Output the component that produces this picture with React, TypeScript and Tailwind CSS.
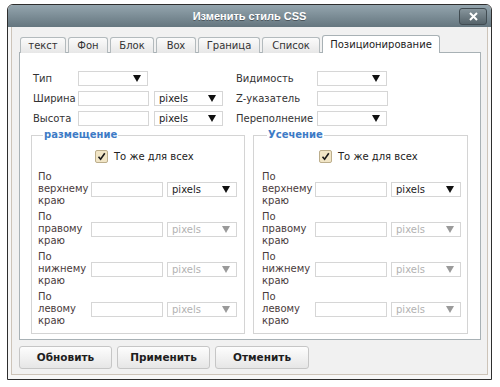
import React from "react";

const tabs = [
  { label: "текст", w: "w-[46px]", active: false },
  { label: "Фон", w: "w-[40px]", active: false },
  { label: "Блок", w: "w-[44px]", active: false },
  { label: "Box", w: "w-[40px]", active: false },
  { label: "Граница", w: "w-[62px]", active: false },
  { label: "Список", w: "w-[58px]", active: false },
  { label: "Позиционирование", w: "w-[118px]", active: true },
];

function Arrow({ disabled }: { disabled?: boolean }) {
  return (
    <svg width="8" height="7" viewBox="0 0 8 7" className="shrink-0">
      <polygon points="0,0 8,0 4,7" fill={disabled ? "#9a9a9a" : "#111"} />
    </svg>
  );
}

function Select({
  w,
  text,
  disabled,
}: {
  w: string;
  text?: string;
  disabled?: boolean;
}) {
  return (
    <div
      className={`${w} h-[15px] bg-white border border-[#d6d6d6] flex items-center justify-between pl-[4px] pr-[6px] text-[10px] leading-[13px] ${
        disabled ? "text-[#b2b2b2]" : "text-[#222]"
      }`}
    >
      <span>{text ?? ""}</span>
      <Arrow disabled={disabled} />
    </div>
  );
}

function Input({ w }: { w: string }) {
  return <div className={`${w} h-[15px] bg-white border border-[#d6d6d6]`} />;
}

function Checkbox() {
  return (
    <div className="w-[13px] h-[13px] rounded-[2px] border border-[#bcae8c] bg-[#f1e5c6] flex items-center justify-center">
      <svg width="9" height="9" viewBox="0 0 9 9">
        <path d="M1.5 4.8 L3.6 7.2 L7.8 1.2" stroke="#1a1a1a" strokeWidth="1.6" fill="none" />
      </svg>
    </div>
  );
}

function EdgeRow({ lines, disabled }: { lines: string[]; disabled?: boolean }) {
  return (
    <div className="flex items-center h-[36px]">
      <div className="w-[53px] text-[10px] leading-[12px] text-[#4a3b3b]">
        {lines.map((l) => (
          <div key={l}>{l}</div>
        ))}
      </div>
      <Input w="w-[72px]" />
      <div className="w-[4px]" />
      <Select w="w-[70px]" text="pixels" disabled={disabled} />
    </div>
  );
}

function Group({ title, padL }: { title: string; padL: string }) {
  return (
    <fieldset className={`border border-[#d4d4d4] ${padL} pr-[6px] pb-[6px]`}>
      <legend className="ml-[5px] px-[1px] text-[10px] leading-[12px] font-bold text-[#3d7bc6]">
        {title}
      </legend>
      <div className="flex items-center mt-[9px] ml-[57px] gap-[6px]">
        <Checkbox />
        <span className="text-[10px] leading-[13px] text-[#222]">То же для всех</span>
      </div>
      <div className="flex flex-col gap-[4px] mt-[8px]">
        <EdgeRow lines={["По", "верхнему", "краю"]} />
        <EdgeRow lines={["По", "правому", "краю"]} disabled />
        <EdgeRow lines={["По", "нижнему", "краю"]} disabled />
        <EdgeRow lines={["По", "левому", "краю"]} disabled />
      </div>
    </fieldset>
  );
}

function Btn({ label, w }: { label: string; w: string }) {
  return (
    <div
      className={`${w} h-[23px] rounded-[3px] border border-[#c6c6c6] bg-gradient-to-b from-[#fdfdfd] to-[#e6e6e6] flex items-center justify-center text-[10.5px] font-bold text-[#1e1e1e]`}
    >
      {label}
    </div>
  );
}

export default function App() {
  return (
    <div className="w-[500px] h-[387px] bg-white font-['DejaVu_Sans',sans-serif] overflow-hidden">
      <div className="ml-[7px] mt-[4px] w-[485px] h-[376px] border border-[#2e2e2e] rounded-t-[6px] flex flex-col overflow-hidden bg-[#f7f7f7]">
        {/* Title bar */}
        <div className="h-[22px] grid grid-cols-[1fr_auto_1fr] items-center bg-gradient-to-b from-[#94a5ae] to-[#65767f]">
          <div />
          <div className="font-['Liberation_Sans',sans-serif] text-[11px] font-bold text-white [text-shadow:0_1px_0_rgba(0,0,0,0.35)]">
            Изменить стиль CSS
          </div>
          <div className="flex justify-end pr-[4px]">
            <div className="w-[28px] h-[17px] rounded-[3px] border border-[#414c52] bg-gradient-to-b from-[#87959c] to-[#56646b] flex items-center justify-center">
              <svg width="9" height="9" viewBox="0 0 9 9">
                <path d="M1 1 L8 8 M8 1 L1 8" stroke="#fff" strokeWidth="2" />
              </svg>
            </div>
          </div>
        </div>
        {/* Body */}
        <div className="flex-1 px-[3px] pb-[4px] flex">
          <div className="flex-1 border-x border-b border-[#cdc4b9] bg-[#f1f1f1] pl-[7px] pr-[6px] pt-[8px] flex flex-col">
            {/* Tabs */}
            <div className="flex items-end gap-[2px] pl-[1px] h-[18px] -mb-px relative z-10">
              {tabs.map((t) =>
                t.active ? (
                  <div
                    key={t.label}
                    className={`${t.w} h-[18px] rounded-t-[3px] border border-b-0 border-[#a8b1b5] bg-white flex items-center justify-center pb-[1px] text-[10px] text-[#222]`}
                  >
                    {t.label}
                  </div>
                ) : (
                  <div
                    key={t.label}
                    className={`${t.w} h-[16px] rounded-t-[3px] border border-b-0 border-[#b3babd] bg-gradient-to-b from-[#fbfbfb] to-[#e7e7e7] flex items-center justify-center text-[10px] text-[#333]`}
                  >
                    {t.label}
                  </div>
                )
              )}
            </div>
            {/* Panel */}
            <div className="h-[288px] border border-[#a8b1b5] bg-white pt-[18px] pl-[11px] pr-[11px]">
              <div className="pl-[2px] flex flex-col gap-[5px] text-[10px] text-[#333]">
                <div className="flex items-center h-[15px]">
                  <div className="w-[45px]">Тип</div>
                  <Select w="w-[70px]" />
                  <div className="w-[88px]" />
                  <div className="w-[81px]">Видимость</div>
                  <Select w="w-[70px]" />
                </div>
                <div className="flex items-center h-[15px]">
                  <div className="w-[45px]">Ширина</div>
                  <Input w="w-[71px]" />
                  <div className="w-[5px]" />
                  <Select w="w-[69px]" text="pixels" />
                  <div className="w-[13px]" />
                  <div className="w-[81px]">Z-указатель</div>
                  <Input w="w-[71px]" />
                </div>
                <div className="flex items-center h-[15px]">
                  <div className="w-[45px]">Высота</div>
                  <Input w="w-[71px]" />
                  <div className="w-[5px]" />
                  <Select w="w-[69px]" text="pixels" />
                  <div className="w-[13px]" />
                  <div className="w-[81px]">Переполнение</div>
                  <Select w="w-[70px]" />
                </div>
              </div>
              <div className="flex gap-[8px] mt-[3px]">
                <div className="w-[214px]">
                  <Group title="размещение" padL="pl-[6px]" />
                </div>
                <div className="w-[215px]">
                  <Group title="Усечение" padL="pl-[8px]" />
                </div>
              </div>
            </div>
            {/* Buttons */}
            <div className="flex gap-[5px] mt-[6px]">
              <Btn label="Обновить" w="w-[93px]" />
              <Btn label="Применить" w="w-[93px]" />
              <Btn label="Отменить" w="w-[94px]" />
            </div>
          </div>
        </div>
      </div>
    </div>
  );
}
